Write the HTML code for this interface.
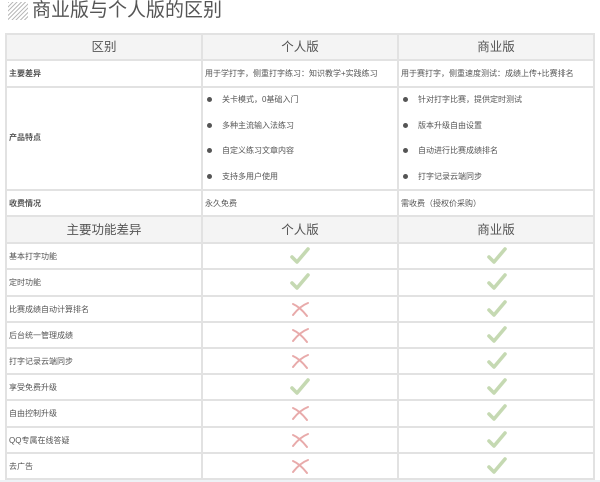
<!DOCTYPE html><html><head><meta charset="utf-8"><style>
body{margin:0;width:600px;height:482px;background:#fff;position:relative;overflow:hidden;font-family:"Liberation Sans","Noto Sans CJK SC",sans-serif;color:#555}
.a{position:absolute}
.h{background:#e2e2e2}
.t{position:absolute;font-size:8px;color:#555;white-space:nowrap;line-height:10px}
.H{position:absolute;font-size:12.5px;color:#555;text-align:center;line-height:14px}
.dot{position:absolute;width:5px;height:5px;border-radius:50%;background:#555}
</style></head><body>
<div class="a" style="left:8px;top:2px;width:20px;height:18px;background:repeating-linear-gradient(135deg,#bbb 0 1px,#fff 1px 3px)"></div>
<div class="a" style="left:32px;top:0px;font-size:19px;color:#555;line-height:22px">商业版与个人版的区别</div>
<div class="a" style="left:6px;top:33px;width:588px;height:27px;background:#f4f4f4"></div>
<div class="a" style="left:6px;top:216px;width:588px;height:27px;background:#f4f4f4"></div>
<div class="a h" style="left:6px;top:33px;width:588px;height:2px"></div>
<div class="a h" style="left:6px;top:59px;width:588px;height:2px"></div>
<div class="a h" style="left:6px;top:86px;width:588px;height:2px"></div>
<div class="a h" style="left:6px;top:189px;width:588px;height:2px"></div>
<div class="a h" style="left:6px;top:215px;width:588px;height:2px"></div>
<div class="a h" style="left:6px;top:242px;width:588px;height:2px"></div>
<div class="a h" style="left:6px;top:268px;width:588px;height:2px"></div>
<div class="a h" style="left:6px;top:295px;width:588px;height:2px"></div>
<div class="a h" style="left:6px;top:321px;width:588px;height:2px"></div>
<div class="a h" style="left:6px;top:347px;width:588px;height:2px"></div>
<div class="a h" style="left:6px;top:373px;width:588px;height:2px"></div>
<div class="a h" style="left:6px;top:399px;width:588px;height:2px"></div>
<div class="a h" style="left:6px;top:426px;width:588px;height:2px"></div>
<div class="a h" style="left:6px;top:452px;width:588px;height:2px"></div>
<div class="a h" style="left:6px;top:478px;width:588px;height:2px"></div>
<div class="a h" style="left:5px;top:33px;width:2px;height:447px"></div>
<div class="a h" style="left:201px;top:33px;width:2px;height:447px"></div>
<div class="a h" style="left:397px;top:33px;width:2px;height:447px"></div>
<div class="a h" style="left:593px;top:33px;width:2px;height:447px"></div>
<div class="a" style="left:0;top:480px;width:600px;height:2px;background:#eef2f6"></div>
<div class="H" style="left:6px;top:40px;width:196px">区别</div>
<div class="H" style="left:202px;top:40px;width:196px">个人版</div>
<div class="H" style="left:398px;top:40px;width:196px">商业版</div>
<div class="t" style="left:9px;top:69px;font-weight:bold">主要差异</div>
<div class="t" style="left:205px;top:69px">用于学打字，侧重打字练习：知识教学+实践练习</div>
<div class="t" style="left:401px;top:69px">用于赛打字，侧重速度测试：成绩上传+比赛排名</div>
<div class="t" style="left:9px;top:133px;font-weight:bold">产品特点</div>
<div class="dot" style="left:207px;top:97px"></div><div class="t" style="left:222px;top:95px">关卡模式，0基础入门</div>
<div class="dot" style="left:207px;top:123px"></div><div class="t" style="left:222px;top:121px">多种主流输入法练习</div>
<div class="dot" style="left:207px;top:148px"></div><div class="t" style="left:222px;top:146px">自定义练习文章内容</div>
<div class="dot" style="left:207px;top:174px"></div><div class="t" style="left:222px;top:172px">支持多用户使用</div>
<div class="dot" style="left:403px;top:97px"></div><div class="t" style="left:418px;top:95px">针对打字比赛，提供定时测试</div>
<div class="dot" style="left:403px;top:123px"></div><div class="t" style="left:418px;top:121px">版本升级自由设置</div>
<div class="dot" style="left:403px;top:148px"></div><div class="t" style="left:418px;top:146px">自动进行比赛成绩排名</div>
<div class="dot" style="left:403px;top:174px"></div><div class="t" style="left:418px;top:172px">打字记录云端同步</div>
<div class="t" style="left:9px;top:199px;font-weight:bold">收费情况</div>
<div class="t" style="left:205px;top:199px">永久免费</div>
<div class="t" style="left:401px;top:199px">需收费（授权价采购）</div>
<div class="H" style="left:6px;top:223px;width:196px">主要功能差异</div>
<div class="H" style="left:202px;top:223px;width:196px">个人版</div>
<div class="H" style="left:398px;top:223px;width:196px">商业版</div>
<svg class="a" style="left:0;top:0" width="600" height="482">
<defs>
<g id="c"><path d="M-8,1 L-3,6 L8,-7" stroke="#c5d9b2" stroke-width="3.6" fill="none" stroke-linecap="round" stroke-linejoin="round"/></g>
<g id="x"><path d="M-7,-5 Q0,-2 7,7 M-7,6 Q0,-3 8,-6" stroke="#e8aaaa" stroke-width="2" fill="none" stroke-linecap="round"/></g>
</defs>
<use href="#c" x="300" y="256"/><use href="#c" x="497" y="256"/>
<use href="#c" x="300" y="282"/><use href="#c" x="497" y="282"/>
<use href="#x" x="300" y="309"/><use href="#c" x="497" y="309"/>
<use href="#x" x="300" y="335"/><use href="#c" x="497" y="335"/>
<use href="#x" x="300" y="361"/><use href="#c" x="497" y="361"/>
<use href="#c" x="300" y="387"/><use href="#c" x="497" y="387"/>
<use href="#x" x="300" y="413"/><use href="#c" x="497" y="413"/>
<use href="#x" x="300" y="440"/><use href="#c" x="497" y="440"/>
<use href="#x" x="300" y="466"/><use href="#c" x="497" y="466"/>
</svg>
<div class="t" style="left:9px;top:252px">基本打字功能</div>
<div class="t" style="left:9px;top:278px">定时功能</div>
<div class="t" style="left:9px;top:305px">比赛成绩自动计算排名</div>
<div class="t" style="left:9px;top:331px">后台统一管理成绩</div>
<div class="t" style="left:9px;top:357px">打字记录云端同步</div>
<div class="t" style="left:9px;top:383px">享受免费升级</div>
<div class="t" style="left:9px;top:409px">自由控制升级</div>
<div class="t" style="left:9px;top:436px">QQ专属在线答疑</div>
<div class="t" style="left:9px;top:462px">去广告</div>
</body></html>
